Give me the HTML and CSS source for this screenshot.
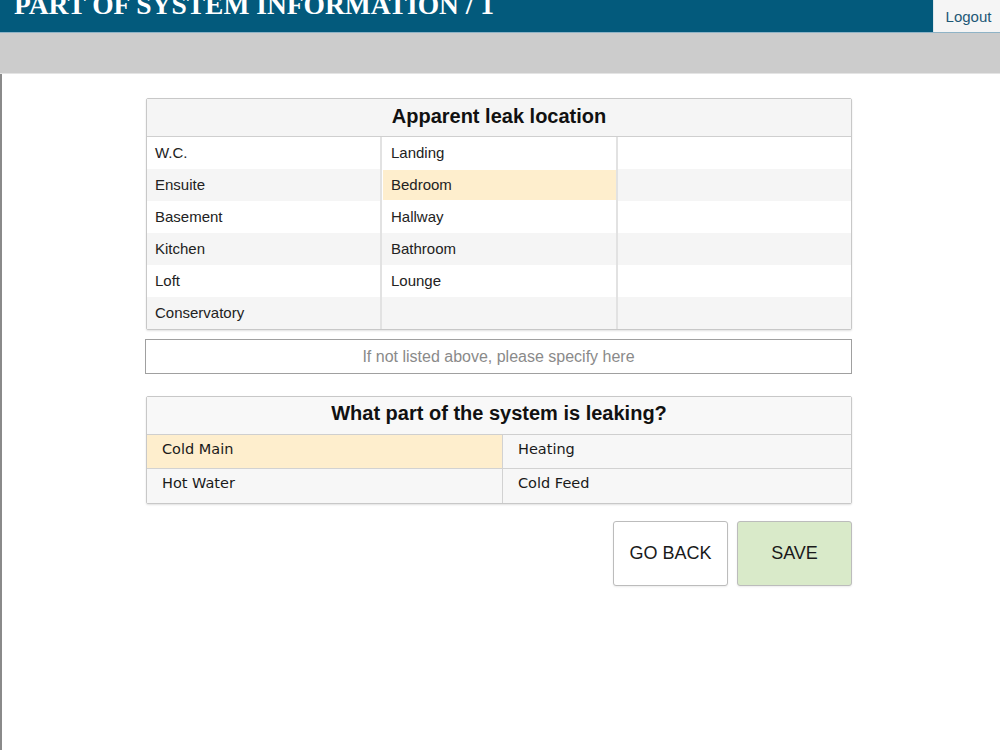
FILE: index.html
```html
<!DOCTYPE html>
<html lang="en">
<head>
    <meta charset="UTF-8">
    <meta name="viewport" content="width=device-width, initial-scale=1.0">
    <title>Part of System Information</title>
    <link rel="stylesheet" href="styles.css">
</head>
<body>
    <div class="topbar">
        <h1 class="page-title">PART OF SYSTEM INFORMATION / 1</h1>
        <a href="#" class="logout">Logout</a>
    </div>
    <div class="subbar"></div>

    <div class="main">
        <div class="container">
            <div class="panel">
                <div class="panel-head">Apparent leak location</div>
                <div class="location-grid">
                    <div class="cell">W.C.</div>
                    <div class="cell">Landing</div>
                    <div class="cell"></div>

                    <div class="cell">Ensuite</div>
                    <div class="cell selected">Bedroom</div>
                    <div class="cell"></div>

                    <div class="cell">Basement</div>
                    <div class="cell">Hallway</div>
                    <div class="cell"></div>

                    <div class="cell">Kitchen</div>
                    <div class="cell">Bathroom</div>
                    <div class="cell"></div>

                    <div class="cell">Loft</div>
                    <div class="cell">Lounge</div>
                    <div class="cell"></div>

                    <div class="cell">Conservatory</div>
                    <div class="cell"></div>
                    <div class="cell"></div>
                </div>
            </div>

            <input type="text" class="other-input" placeholder="If not listed above, please specify here">

            <div class="panel system-panel">
                <div class="panel-head">What part of the system is leaking?</div>
                <div class="system-grid">
                    <div class="opt selected">Cold Main</div>
                    <div class="opt">Heating</div>
                    <div class="opt">Hot Water</div>
                    <div class="opt">Cold Feed</div>
                </div>
            </div>

            <div class="actions">
                <button type="button" class="btn">GO BACK</button>
                <button type="button" class="btn btn-save">SAVE</button>
            </div>
        </div>
    </div>
</body>
</html>
```

FILE: styles.css
```css
* {
    box-sizing: border-box;
}
html, body {
    height: 100%;
}
body {
    margin: 0;
    font-family: "Liberation Sans", Arial, sans-serif;
    background: #fff;
    color: #222;
    display: flex;
    flex-direction: column;
}
.topbar {
    height: 33px;
    background-color: #035a7c;
    border-bottom: 1px solid #8fb3c6;
    display: flex;
    justify-content: space-between;
    overflow: hidden;
}
.page-title {
    margin: -9px 0 0 14px;
    font-family: "Liberation Serif", "Times New Roman", serif;
    font-size: 27.5px;
    line-height: 27px;
    font-weight: bold;
    color: #fff;
}
.logout {
    width: 67px;
    background: #f5f5f5;
    border-left: 1px solid #dde6ea;
    color: #1d5875;
    text-decoration: none;
    font-size: 15px;
    display: flex;
    align-items: center;
    justify-content: center;
    padding-left: 3px;
}
.subbar {
    height: 41px;
    background: #cccccc;
    border-bottom: 1px solid #e4e4e4;
}
.main {
    flex: 1;
    border-left: 2px solid #8a8a8a;
    padding-top: 24px;
}
.container {
    width: 706px;
    margin-left: 144px;
}
.panel {
    border: 1px solid #c8c8c8;
    border-radius: 2px;
    background: #fff;
    box-shadow: 0 1px 2px rgba(0, 0, 0, 0.12);
}
.panel-head {
    height: 38px;
    background: #f5f5f5;
    border-bottom: 1px solid #cfcfcf;
    font-size: 20px;
    font-weight: bold;
    text-align: center;
    line-height: 34px;
    color: #111;
}
.location-grid {
    display: grid;
    grid-template-columns: 235px 236px 1fr;
    grid-auto-rows: 32px;
}
.cell {
    font-size: 15px;
    padding: 0 8px;
    line-height: 32px;
    border-right: 2px solid #e2e2e2;
}
.cell:nth-child(3n) {
    border-right: none;
}
.cell:nth-child(3n+2) {
    padding-left: 9px;
}
.location-grid .cell:nth-child(6n+4),
.location-grid .cell:nth-child(6n+5),
.location-grid .cell:nth-child(6n+6) {
    background: #f5f5f5;
}
.location-grid .cell.selected {
    background: #feeecd;
    box-shadow: inset 1px 1px 0 #fff, inset 0 -1px 0 #fff;
}
.other-input {
    display: block;
    width: 707px;
    margin: 9px 0 0 -1px;
    height: 35px;
    border: 1px solid #a0a0a0;
    text-align: center;
    font-family: "Liberation Sans", Arial, sans-serif;
    font-size: 16px;
    color: #333;
    outline: none;
}
.other-input::placeholder {
    color: #8a8a8a;
}
.system-panel {
    margin-top: 22px;
}
.system-panel .panel-head {
    height: 38px;
    background: #f8f8f8;
    line-height: 33px;
}
.system-grid {
    display: grid;
    grid-template-columns: 356px 1fr;
    grid-auto-rows: 34px;
}
.opt {
    font-family: "DejaVu Sans", Tahoma, sans-serif;
    font-size: 14.5px;
    line-height: 28px;
    padding: 0 15px;
    background: #f7f7f7;
    border-right: 1px solid #d2d2d2;
    border-bottom: 1px solid #d2d2d2;
    color: #1a1a1a;
}
.opt:nth-child(2n) {
    border-right: none;
}
.opt:nth-last-child(-n+2) {
    border-bottom: none;
}
.opt.selected {
    background: #feeecd;
}
.actions {
    display: flex;
    justify-content: flex-end;
    gap: 9px;
    margin-top: 17px;
}
.btn {
    width: 115px;
    height: 65px;
    border: 1px solid #bcbcbc;
    border-radius: 3px;
    background: #fff;
    font-family: "Liberation Sans", Arial, sans-serif;
    font-size: 18px;
    color: #1a1a1a;
    cursor: pointer;
    box-shadow: 0 1px 2px rgba(0, 0, 0, 0.08);
}
.btn-save {
    background: #d9eac9;
}
```
